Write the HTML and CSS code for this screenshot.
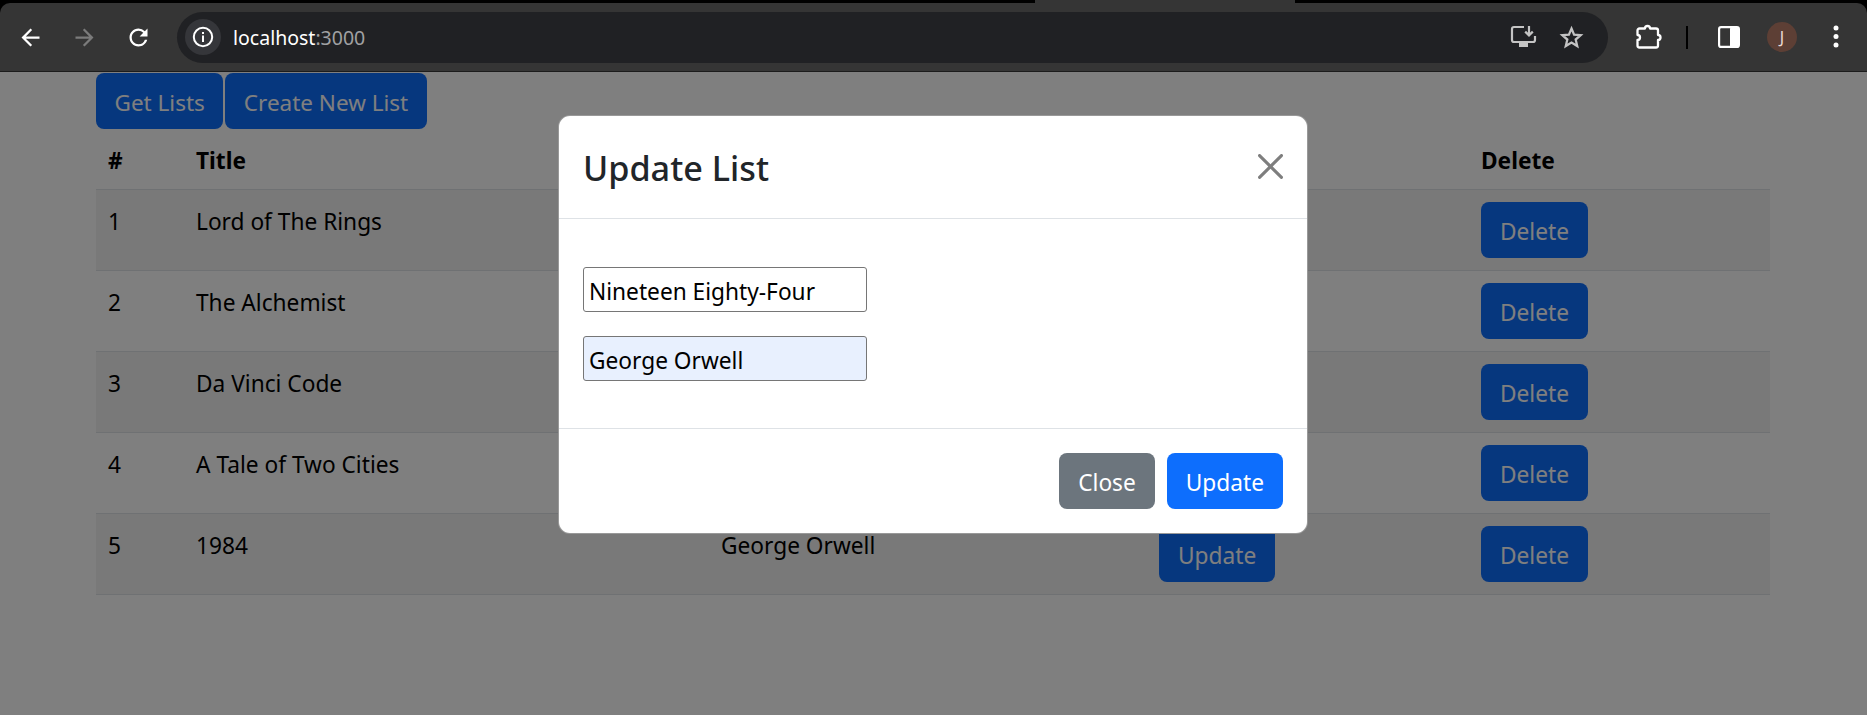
FILE: index.html
```html
<!DOCTYPE html>
<html lang="en">
<head>
    <meta charset="UTF-8">
    <title>localhost:3000</title>
    <link rel="stylesheet" href="styles.css">
</head>
<body>
    <div class="browser">
        <div class="tabstrip"><div class="tab"></div></div>
        <div class="toolbar">
            <span class="nav">
                <svg width="27" height="27" viewBox="0 0 24 24"><path fill="#fff" d="M20 11H7.83l5.59-5.59L12 4l-8 8 8 8 1.41-1.41L7.83 13H20v-2z"/></svg>
            </span>
            <span class="nav">
                <svg width="27" height="27" viewBox="0 0 24 24"><path fill="#7b7b7b" d="M4 11h12.17l-5.59-5.59L12 4l8 8-8 8-1.41-1.41L16.17 13H4v-2z"/></svg>
            </span>
            <span class="nav">
                <svg width="27" height="27" viewBox="0 0 24 24"><path fill="#fff" d="M17.65 6.35A7.958 7.958 0 0 0 12 4c-4.42 0-7.99 3.58-7.99 8s3.57 8 7.99 8c3.73 0 6.84-2.55 7.73-6h-2.08A5.99 5.99 0 0 1 12 18c-3.31 0-6-2.69-6-6s2.69-6 6-6c1.66 0 3.14.69 4.22 1.78L13 11h7V4l-2.35 2.35z"/></svg>
            </span>
            <div class="omnibox">
                <span class="site-info">
                    <svg width="22" height="22" viewBox="0 0 22 22"><circle cx="11" cy="11" r="9.2" fill="none" stroke="#fff" stroke-width="2"/><rect x="10" y="9.5" width="2" height="6.5" fill="#fff"/><rect x="10" y="6" width="2" height="2" fill="#fff"/></svg>
                </span>
                <span class="url">localhost<span class="url-port">:3000</span></span>
                <span class="omni-icon install">
                    <svg width="27" height="24" viewBox="0 0 27 24"><path fill="none" stroke="#c4c4c4" stroke-width="2.2" d="M14 2H4a2 2 0 0 0-2 2v11a2 2 0 0 0 2 2h19a2 2 0 0 0 2-2v-4"/><path fill="none" stroke="#c4c4c4" stroke-width="2.2" d="M19 1v9M15.2 6.6l3.8 3.8 3.8-3.8"/><rect x="9" y="18" width="9" height="4" fill="#c4c4c4"/></svg>
                </span>
                <span class="omni-icon star">
                    <svg width="27" height="27" viewBox="0 0 24 24"><path fill="none" stroke="#c4c4c4" stroke-width="2" d="M12 4l2.3 5.4 5.9.5-4.5 3.9 1.4 5.8L12 16.5l-5.1 3.1 1.4-5.8-4.5-3.9 5.9-.5z"/></svg>
                </span>
            </div>
            <span class="tool puzzle">
                <svg width="30" height="30" viewBox="0 0 30 30"><path fill="none" stroke="#fff" stroke-width="2.3" stroke-linejoin="round" d="M5.5 6.5H11a2.5 2.5 0 0 1 5 0H22a2 2 0 0 1 2 2V13a2.5 2.5 0 0 1 0 5v5.5a2 2 0 0 1-2 2H5.5a2 2 0 0 1-2-2V18a2.5 2.5 0 0 0 0-5V8.5a2 2 0 0 1 2-2z"/></svg>
            </span>
            <span class="separator"></span>
            <span class="tool panel">
                <svg width="22" height="22" viewBox="0 0 22 22"><rect x="1.1" y="1.1" width="19.8" height="19.8" rx="2" fill="none" stroke="#fff" stroke-width="2.2"/><rect x="12" y="1" width="9" height="20" rx="1.5" fill="#fff"/></svg>
            </span>
            <span class="avatar">J</span>
            <span class="tool dots">
                <svg width="6" height="24" viewBox="0 0 6 24"><circle cx="3" cy="3" r="2.5" fill="#fff"/><circle cx="3" cy="11.5" r="2.5" fill="#fff"/><circle cx="3" cy="20" r="2.5" fill="#fff"/></svg>
            </span>
        </div>

        <div class="page">
            <div class="container">
                <div class="actions">
                    <button class="btn btn-primary">Get Lists</button>
                    <button class="btn btn-primary">Create New List</button>
                </div>
                <table class="list-table">
                    <colgroup>
                        <col class="col-num">
                        <col class="col-title">
                        <col class="col-author">
                        <col class="col-update">
                        <col class="col-delete">
                    </colgroup>
                    <thead>
                        <tr><th>#</th><th>Title</th><th></th><th></th><th>Delete</th></tr>
                    </thead>
                    <tbody>
                        <tr>
                            <td>1</td><td>Lord of The Rings</td><td></td><td></td>
                            <td class="cell-btn"><button class="btn btn-primary">Delete</button></td>
                        </tr>
                        <tr>
                            <td>2</td><td>The Alchemist</td><td></td><td></td>
                            <td class="cell-btn"><button class="btn btn-primary">Delete</button></td>
                        </tr>
                        <tr>
                            <td>3</td><td>Da Vinci Code</td><td></td><td></td>
                            <td class="cell-btn"><button class="btn btn-primary">Delete</button></td>
                        </tr>
                        <tr>
                            <td>4</td><td>A Tale of Two Cities</td><td></td><td></td>
                            <td class="cell-btn"><button class="btn btn-primary">Delete</button></td>
                        </tr>
                        <tr>
                            <td>5</td><td>1984</td><td>George Orwell</td>
                            <td class="cell-btn"><button class="btn btn-primary">Update</button></td>
                            <td class="cell-btn"><button class="btn btn-primary">Delete</button></td>
                        </tr>
                    </tbody>
                </table>
            </div>

            <div class="backdrop"></div>

            <div class="modal">
                <div class="modal-header">
                    <h2 class="modal-title">Update List</h2>
                    <svg class="btn-close" width="25" height="25" viewBox="0 0 16 16"><path d="M.293.293a1 1 0 011.414 0L8 6.586 14.293.293a1 1 0 111.414 1.414L9.414 8l6.293 6.293a1 1 0 01-1.414 1.414L8 9.414l-6.293 6.293a1 1 0 01-1.414-1.414L6.586 8 .293 1.707a1 1 0 010-1.414z"/></svg>
                </div>
                <div class="modal-body">
                    <input class="field" type="text" value="Nineteen Eighty-Four">
                    <input class="field field-autofill" type="text" value="George Orwell">
                </div>
                <div class="modal-footer">
                    <button class="btn btn-secondary">Close</button>
                    <button class="btn btn-primary">Update</button>
                </div>
            </div>
        </div>
    </div>
</body>
</html>
```

FILE: styles.css
```css
* {
    box-sizing: border-box;
}
html, body {
    height: 100%;
}
body {
    margin: 0;
    overflow: hidden;
    font-family: "Noto Sans", "Open Sans", sans-serif;
    font-size: 22.7px;
    background: #000;
    color: #212529;
}
.browser {
    height: 100%;
    display: flex;
    flex-direction: column;
}

/* browser chrome */
.tabstrip {
    height: 3px;
    background: #000;
    padding-left: 1035px;
}
.tab {
    width: 260px;
    height: 3px;
    background: #353535;
}
.toolbar {
    height: 69px;
    flex-shrink: 0;
    display: flex;
    align-items: center;
    padding-left: 3px;
    background: #353535;
    border-bottom: 1px solid #1c1c1c;
    border-radius: 10px 10px 0 0;
}
.nav {
    width: 54px;
    height: 54px;
    display: flex;
    align-items: center;
    justify-content: center;
}
.omnibox {
    width: 1431px;
    height: 51px;
    margin-left: 12px;
    display: flex;
    align-items: center;
    padding-left: 8px;
    background: #202124;
    border-radius: 26px;
}
.site-info {
    width: 36px;
    height: 36px;
    display: flex;
    align-items: center;
    justify-content: center;
    background: #35363a;
    border-radius: 50%;
}
.url {
    margin-left: 12px;
    font-size: 19.5px;
    color: #fff;
}
.url-port {
    color: #a0a1a3;
}
.omni-icon {
    display: flex;
}
.install {
    margin-left: auto;
}
.star {
    margin-left: 21px;
    margin-right: 23px;
}
.tool {
    display: flex;
    align-items: center;
}
.puzzle {
    margin-left: 26px;
}
.separator {
    width: 2px;
    height: 23px;
    margin-left: 22px;
    background: #000;
}
.panel {
    margin-left: 30px;
}
.avatar {
    width: 30px;
    height: 30px;
    margin-left: 27px;
    display: flex;
    align-items: center;
    justify-content: center;
    font-size: 16px;
    color: #ecdcd6;
    background: #5d3f35;
    border-radius: 50%;
}
.dots {
    margin-left: 36px;
}

/* page */
.page {
    flex: 1;
    position: relative;
    background: #fff;
    color: #000;
}
.container {
    padding: 1px 97px 0 96px;
}
.actions {
    display: flex;
    gap: 2px;
}
.actions .btn {
    padding: 2px 18.5px 0;
    font-size: 22.5px;
}
.btn {
    height: 56px;
    padding: 2px 19px 0;
    font-family: inherit;
    font-size: 22.7px;
    color: #fff;
    border: none;
    border-radius: 8px;
}
.btn-primary {
    background: #0d6efd;
}
.btn-secondary {
    background: #6c757d;
}

.list-table {
    width: 100%;
    table-layout: fixed;
    border-collapse: collapse;
}
.col-num { width: 88px; }
.col-title { width: 525px; }
.col-author { width: 438px; }
.col-update { width: 322px; }
.list-table th,
.list-table td {
    padding: 14px 12px 10px;
    text-align: left;
    vertical-align: top;
    line-height: 35px;
    border-bottom: 1px solid #dee2e6;
}
.list-table th {
    padding: 14px 12px 11px;
    font-weight: 700;
}
.list-table .cell-btn {
    padding: 12px;
}
.list-table tbody tr:nth-child(odd) {
    background: rgba(0, 0, 0, 0.05);
}

/* modal */
.backdrop {
    position: absolute;
    inset: 0;
    background: rgba(0, 0, 0, 0.5);
}
.modal {
    position: absolute;
    top: 43px;
    left: 558px;
    width: 750px;
    height: 419px;
    display: flex;
    flex-direction: column;
    background: #fff;
    color: #212529;
    border: 1px solid rgba(0, 0, 0, 0.4);
    border-radius: 12px;
}
.modal-header {
    height: 103px;
    flex-shrink: 0;
    display: flex;
    align-items: center;
    justify-content: space-between;
    padding: 1px 24px 0 24px;
    border-bottom: 1px solid #dee2e6;
}
.modal-title {
    margin: 0;
    font-size: 34.2px;
    font-weight: 500;
}
.btn-close {
    opacity: 0.5;
    margin-top: -3px;
}
.modal-body {
    flex: 1;
    display: flex;
    flex-direction: column;
    align-items: flex-start;
    gap: 24px;
    padding: 48px 24px 0;
}
.field {
    width: 284px;
    height: 45px;
    padding: 4px 5px 0;
    font-family: inherit;
    font-size: 22.7px;
    color: #000;
    background: #fff;
    border: 1px solid #767676;
    border-radius: 3px;
}
.field-autofill {
    background: #e8f0fe;
}
.modal-footer {
    height: 105px;
    flex-shrink: 0;
    display: flex;
    justify-content: flex-end;
    align-items: flex-start;
    gap: 12px;
    padding: 24px 24px 0 0;
    border-top: 1px solid #dee2e6;
}
```
